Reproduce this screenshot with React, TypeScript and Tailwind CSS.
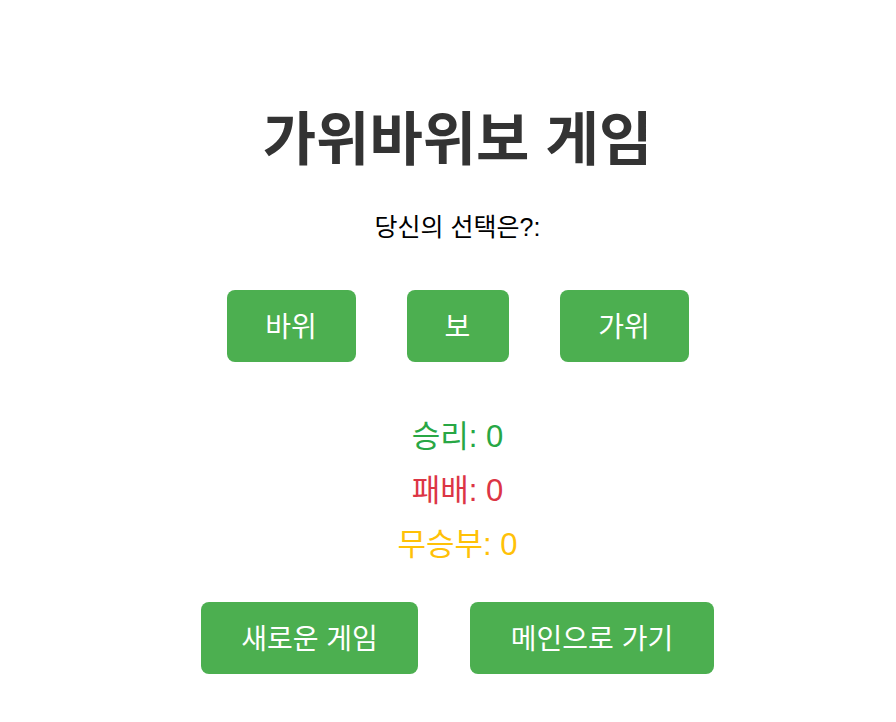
const choices = [
  { label: "바위", width: "w-[129px]" },
  { label: "보", width: "w-[102px]" },
  { label: "가위", width: "w-[129px]" },
];

const scores = [
  { label: "승리", value: 0, color: "text-[#28a745]" },
  { label: "패배", value: 0, color: "text-[#dc3545]" },
  { label: "무승부", value: 0, color: "text-[#ffc107]" },
];

export default function App() {
  return (
    <div className="min-h-screen bg-white font-['Liberation_Sans','Noto_Sans_CJK_KR',sans-serif]">
      <div className="flex flex-col items-center pt-[110px] pl-[19px]">
        <h1 className="text-[58px] leading-[60px] font-bold text-[#333333]">
          가위바위보 게임
        </h1>

        <p className="mt-[41px] text-[25px] leading-[32px] text-black">
          당신의 선택은?:
        </p>

        <div className="mt-[47px] flex gap-[51px]">
          {choices.map((choice) => (
            <button
              key={choice.label}
              className={`${choice.width} h-[72px] pt-[3px] rounded-lg bg-[#4caf50] text-white text-[28px] leading-none`}
            >
              {choice.label}
            </button>
          ))}
        </div>

        <div className="mt-[48px] flex flex-col items-center">
          {scores.map((s) => (
            <p
              key={s.label}
              className={`text-[31px] leading-[54px] ${s.color}`}
            >
              {s.label}: {s.value}
            </p>
          ))}
        </div>

        <div className="mt-[30px] flex gap-[52px]">
          <button className="w-[217px] h-[72px] pt-[3px] rounded-lg bg-[#4caf50] text-white text-[28px] leading-none">
            새로운 게임
          </button>
          <button className="w-[244px] h-[72px] pt-[3px] rounded-lg bg-[#4caf50] text-white text-[28px] leading-none">
            메인으로 가기
          </button>
        </div>
      </div>
    </div>
  );
}
